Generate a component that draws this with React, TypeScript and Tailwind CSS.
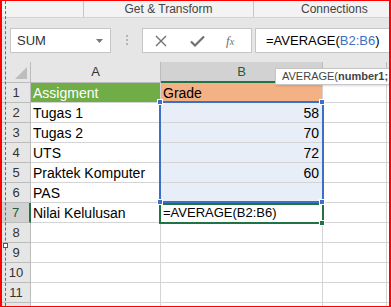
import React from 'react';

const font = { fontFamily: '"Liberation Sans", Arial, sans-serif' };

const rows: { a: string; b: string }[] = [
    { a: 'Assigment', b: 'Grade' },
    { a: 'Tugas 1', b: '58' },
    { a: 'Tugas 2', b: '70' },
    { a: 'UTS', b: '72' },
    { a: 'Praktek Komputer', b: '60' },
    { a: 'PAS', b: '' },
    { a: 'Nilai Kelulusan', b: '=AVERAGE(B2:B6)' },
    { a: '', b: '' },
    { a: '', b: '' },
    { a: '', b: '' },
    { a: '', b: '' },
    { a: '', b: '' },
];

function Handle({ className }: { className: string }) {
    return <div className={`absolute w-[6px] h-[6px] border border-white ${className}`} />;
}

export default function App() {
    return (
        <div
            style={font}
            className="relative w-[391px] h-[307px] overflow-hidden bg-white border-t border-b border-l-2 border-r-2 border-[#ff0000]"
        >
            {/* ribbon group labels */}
            <div className="flex h-[17px] bg-[#f3f3f3] border-b border-[#d4d4d4] text-[12px] text-[#444] leading-[16px]">
                <div className="w-[81px] shrink-0" />
                <div className="w-[170px] shrink-0 border-l border-[#c6c6c6] text-center">
                    Get &amp; Transform
                </div>
                <div className="flex-1 border-l border-[#c6c6c6] pl-[47px] whitespace-nowrap">
                    Connections
                </div>
            </div>

            {/* formula bar */}
            <div className="flex items-start h-[44px] bg-[#e6e6e6] pt-[10px] pl-[8px]">
                <div className="flex items-center justify-between w-[101px] h-[25px] bg-white border border-[#c6c6c6] pl-[6px] pr-[7px]">
                    <span className="text-[13px] text-[#333]">SUM</span>
                    <svg width="7" height="4" viewBox="0 0 7 4">
                        <path d="M0 0h7L3.5 4z" fill="#777" />
                    </svg>
                </div>
                <div className="flex flex-col gap-[2px] mt-[7px] ml-[15px] mr-[14px]">
                    <div className="w-[2px] h-[2px] bg-[#b4b4b4]" />
                    <div className="w-[2px] h-[2px] bg-[#b4b4b4]" />
                    <div className="w-[2px] h-[2px] bg-[#b4b4b4]" />
                </div>
                <div className="flex items-center w-[110px] h-[25px] bg-white border border-[#c6c6c6]">
                    <svg className="ml-[12px]" width="12" height="12" viewBox="0 0 12 12">
                        <path d="M1 1l10 10M11 1L1 11" stroke="#707070" strokeWidth="1.4" />
                    </svg>
                    <svg className="ml-[23px]" width="15" height="12" viewBox="0 0 15 12">
                        <path d="M1 6.5l4 4L14 1.5" stroke="#707070" strokeWidth="2.2" fill="none" />
                    </svg>
                    <span
                        className="ml-[21px] text-[13px] italic text-[#707070]"
                        style={{ fontFamily: '"Liberation Serif", serif' }}
                    >
                        f<span className="text-[10px]">x</span>
                    </span>
                </div>
                <div className="flex-1 h-[25px] ml-[3px] bg-white border border-r-0 border-[#c6c6c6] pl-[10px] text-[13px] leading-[23px] text-black whitespace-nowrap">
                    =AVERAGE(<span className="text-[#3d6fc6]">B2:B6</span>)
                </div>
            </div>

            {/* grid */}
            <div className="relative">
                <div className="grid grid-cols-[29px_130px_162px_64px_1fr] grid-rows-[21px_repeat(12,20px)]">
                    <div className="relative bg-[#e6e6e6] border-r border-b border-[#bcbcbc]">
                        <svg className="absolute right-[3px] bottom-[3px]" width="12" height="12" viewBox="0 0 12 12">
                            <path d="M12 0V12H0z" fill="#bdbdbd" />
                        </svg>
                    </div>
                    <div className="bg-[#e6e6e6] border-r border-b border-[#bcbcbc] text-center text-[13px] leading-[20px] text-[#333]">
                        A
                    </div>
                    <div className="bg-[#d2d2d2] border-r border-b-2 border-b-[#217346] border-r-[#bcbcbc] text-center text-[13px] leading-[20px] text-[#1e5f3a]">
                        B
                    </div>
                    <div className="bg-[#e6e6e6] border-r border-b border-[#bcbcbc]" />
                    <div className="bg-[#e6e6e6] border-b border-[#bcbcbc]" />

                    {rows.map((r, i) => {
                        const n = i + 1;
                        const active = n === 7;
                        return (
                            <React.Fragment key={n}>
                                <div
                                    className={`flex items-center justify-center border-b border-[#bcbcbc] text-[13px] ${
                                        active
                                            ? 'bg-[#d2d2d2] border-r-2 border-r-[#217346] text-[#1e5f3a]'
                                            : 'bg-[#e6e6e6] border-r border-r-[#bcbcbc] text-[#333]'
                                    }`}
                                >
                                    {n < 12 ? n : ''}
                                </div>
                                <div
                                    className={`border-r border-b border-[#d4d4d4] pl-[2px] text-[14px] leading-[20px] whitespace-nowrap ${
                                        n === 1 ? 'bg-[#70ad47] text-white' : 'text-black'
                                    }`}
                                >
                                    {r.a}
                                </div>
                                <div
                                    className={`border-r border-b border-[#d4d4d4] leading-[20px] whitespace-nowrap ${
                                        n === 1
                                            ? 'bg-[#f4b183] pl-[2px] text-[14px] text-black'
                                            : n >= 2 && n <= 6
                                            ? 'bg-[#e8eef8] pr-[3px] text-right text-[14px] text-black'
                                            : 'pl-[2px] text-[13px] text-black'
                                    }`}
                                >
                                    {r.b}
                                </div>
                                <div className="border-r border-b border-[#d4d4d4]" />
                                <div className="border-b border-[#d4d4d4]" />
                            </React.Fragment>
                        );
                    })}
                </div>

                {/* B2:B6 range reference */}
                <div className="absolute left-[157px] top-[39px] w-[165px] h-[102px] border-2 border-[#3d6fc6]" />
                {/* active cell B7 */}
                <div className="absolute left-[157px] top-[141px] w-[165px] h-[21px] border-2 border-[#217346]" />
                <Handle className="left-[155px] top-[37px] bg-[#3d6fc6]" />
                <Handle className="left-[317px] top-[37px] bg-[#3d6fc6]" />
                <Handle className="left-[155px] top-[137px] bg-[#3d6fc6]" />
                <Handle className="left-[317px] top-[137px] bg-[#3d6fc6]" />
                <Handle className="left-[317px] top-[158px] bg-[#217346]" />
            </div>

            {/* function tooltip */}
            <div className="absolute left-[273px] top-[67px] h-[17px] pl-[6px] pr-[20px] bg-white border border-[#c6c6c6] shadow-[1px_1px_2px_rgba(0,0,0,0.15)] text-[11px] leading-[15px] text-[#444] whitespace-nowrap">
                AVERAGE(<span className="font-bold">number1;</span>
            </div>

            {/* selected shape outline on the left */}
            <div className="absolute left-[3px] top-0 h-full border-l border-dashed border-[#2b74d4]" />
            <div className="absolute left-[1px] top-[242px] w-[5px] h-[5px] bg-white border border-[#555]" />
        </div>
    );
}
